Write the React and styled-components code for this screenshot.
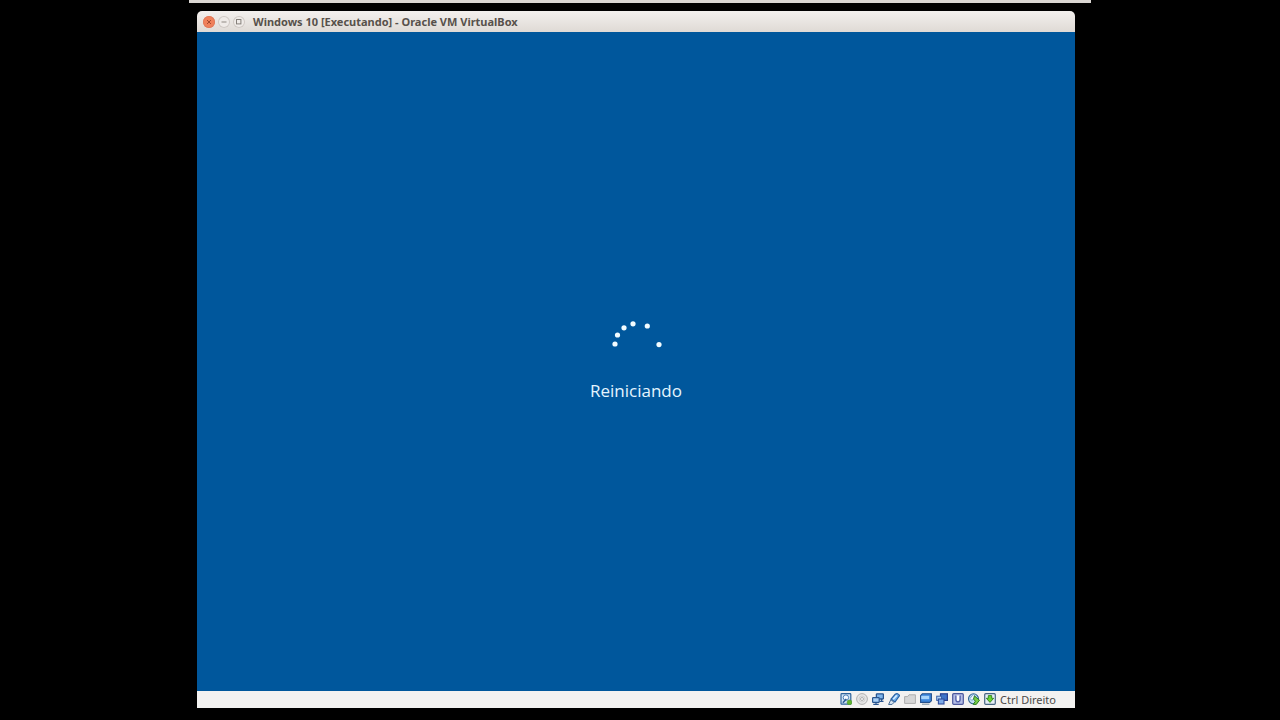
import React from "react";
import styled, { createGlobalStyle } from "styled-components";

const dots = [
  [5, 24],
  [7.5, 15],
  [14, 7.8],
  [23, 3.8],
  [37.3, 6],
  [49, 24.6],
];

const devices = [
  {
    name: "Discos rígidos",
    icon: (
      <>
        <rect x="1" y="0.6" width="9.8" height="10.6" rx="0.8" fill="#cfe2f5" stroke="#2f649c" strokeWidth="1.2" />
        <circle cx="5.9" cy="4.6" r="2.7" fill="#f4f9ff" stroke="#4d80b8" />
        <path d="M2.9 9.8L6.3 6" stroke="#2d5c96" strokeWidth="1.6" />
        <circle cx="9.5" cy="9.4" r="2.4" fill="#62b531" stroke="#4c9a2b" strokeWidth="0.6" />
      </>
    ),
  },
  {
    name: "Discos ópticos",
    icon: (
      <>
        <circle cx="6" cy="6" r="5.4" fill="#e6e6e6" stroke="#b0b0b0" />
        <circle cx="6" cy="6" r="3" fill="none" stroke="#d2d2d2" />
        <circle cx="6" cy="6" r="1.5" fill="#fafafa" stroke="#a0a0a0" strokeWidth="0.8" />
      </>
    ),
  },
  {
    name: "Rede",
    icon: (
      <>
        <rect x="4.4" y="0.8" width="7" height="5.2" rx="0.6" fill="#7fb4ea" stroke="#28548f" strokeWidth="1.3" />
        <path d="M9.6 6v2M7.5 8.4h4" stroke="#28548f" strokeWidth="1.2" />
        <rect x="0.6" y="4.7" width="6.6" height="4.6" rx="0.6" fill="#a9d0f7" stroke="#28548f" strokeWidth="1.2" />
        <path d="M4 9.5v1.4M1.3 11.3h5.4" stroke="#28548f" strokeWidth="1.2" />
      </>
    ),
  },
  {
    name: "USB",
    icon: (
      <>
        <path d="M3 6.2L7.2 1.3Q9.8-0.4 11.6 2.6L7 9z" fill="#6faeeb" stroke="#2b62a5" strokeWidth="1.2" />
        <path d="M5.2 6.2L8.8 2.4" stroke="#d6ebff" strokeWidth="1.6" />
        <path d="M2.8 6.7l3.3 2.6-2 2.1-3.5 0.1z" fill="#d8e4f0" stroke="#456b97" />
      </>
    ),
  },
  {
    name: "Pastas compartilhadas",
    icon: (
      <path d="M0.6 10.4V3.6h3L5 1.8h6.4v8.6z" fill="#d6d6d6" stroke="#aeaeae" strokeLinejoin="round" />
    ),
  },
  {
    name: "Tela",
    icon: (
      <>
        <path d="M2.3 0.8h9.1v7l-1.8 1.6H0.6V2.6z" fill="#3c86dc" stroke="#25508c" strokeWidth="1.1" />
        <path d="M1.2 2.8h8v3.4h-8z" fill="#a8d4fb" />
        <path d="M2 11.2h7.4" stroke="#8a9bac" strokeWidth="1.2" />
      </>
    ),
  },
  {
    name: "Gravação",
    icon: (
      <>
        <rect x="4.5" y="0.8" width="6.9" height="6.6" fill="#3f74c9" stroke="#283f8f" strokeWidth="1.2" />
        <rect x="0.7" y="3.2" width="4.8" height="4.2" fill="#b5d5f6" stroke="#3b62a8" />
        <rect x="2.4" y="6" width="5.6" height="5" fill="#7ba9e8" stroke="#2f4c9b" strokeWidth="1.1" />
      </>
    ),
  },
  {
    name: "Virtualização",
    icon: (
      <>
        <rect x="0.7" y="0.7" width="10.6" height="10.6" rx="1" fill="#b3bde6" stroke="#4c579b" strokeWidth="1.2" />
        <path d="M3.9 2.6v3.8Q3.9 8.8 6 8.8t2.1-2.4V2.6" fill="#fff" stroke="#5661ab" strokeWidth="1.4" />
      </>
    ),
  },
  {
    name: "Integração do mouse",
    icon: (
      <>
        <circle cx="5.5" cy="5.8" r="5" fill="#c0def5" stroke="#356694" strokeWidth="1.1" />
        <path d="M2 5.5L5.4 1.2l1.8 2.5L4 7.5z" fill="#f2f9ff" stroke="#6594bf" strokeWidth="0.8" />
        <path d="M6.4 2.9l5.1 4.3-3.2 4.2H5.2l2.2-3.2-1.8-2z" fill="#78cd46" stroke="#2c7c25" />
      </>
    ),
  },
  {
    name: "Captura do teclado",
    icon: (
      <>
        <rect x="0.7" y="0.7" width="10.6" height="10.6" rx="1" fill="#e4edf5" stroke="#476583" strokeWidth="1.2" />
        <path d="M4.3 2.6h3.4v2.7h2L6 9.4 2.3 5.3h2z" fill="#67d62d" stroke="#2f7f1e" strokeWidth="0.9" />
      </>
    ),
  },
];

export default function App() {
  return (
    <Desktop>
      <GlobalStyle />
      <Panel />
      <Window>
        <TitleBar>
          <WindowButton $close aria-label="Fechar">
            <svg viewBox="0 0 12 12">
              <path d="M4 4l4 4M8 4L4 8" stroke="#a3492f" />
            </svg>
          </WindowButton>
          <WindowButton aria-label="Minimizar">
            <svg viewBox="0 0 12 12">
              <path d="M3.5 6h5" stroke="#8f8983" />
            </svg>
          </WindowButton>
          <WindowButton aria-label="Maximizar">
            <svg viewBox="0 0 12 12">
              <rect x="3.5" y="3.5" width="4.4" height="4.4" fill="none" stroke="#85807a" />
            </svg>
          </WindowButton>
          <Title>Windows 10 [Executando] - Oracle VM VirtualBox</Title>
        </TitleBar>
        <Guest>
          <Spinner viewBox="0 0 52 52" aria-hidden="true">
            {dots.map(([x, y]) => (
              <circle key={x} cx={x} cy={y} r="2.6" />
            ))}
          </Spinner>
          <Message>Reiniciando</Message>
        </Guest>
        <StatusBar>
          <Devices>
            {devices.map(({ name, icon }) => (
              <DeviceButton key={name} aria-label={name}>
                <svg viewBox="0 0 12 12" fill="none">
                  {icon}
                </svg>
              </DeviceButton>
            ))}
          </Devices>
          <HostKey>Ctrl Direito</HostKey>
        </StatusBar>
      </Window>
    </Desktop>
  );
}

const GlobalStyle = createGlobalStyle`
  body {
    margin: 0;
    background: #000;
  }
  button {
    padding: 0;
    border: 0;
    background: none;
    svg {
      display: block;
      width: 100%;
      height: 100%;
    }
  }
`;

const Desktop = styled.div`
  box-sizing: border-box;
  min-height: 100vh;
  padding: 0 189px 12px;
  display: flex;
  flex-direction: column;
  gap: 8px;
  background: #000;
`;

const Panel = styled.div`
  height: 3px;
  background: #dad6d2;
`;

const Window = styled.main`
  flex: 1;
  margin: 0 16px 0 8px;
  display: flex;
  flex-direction: column;
  border-radius: 5px 5px 0 0;
  overflow: hidden;
`;

const TitleBar = styled.header`
  height: 21px;
  padding: 0 6px;
  display: flex;
  align-items: center;
  gap: 3px;
  background: linear-gradient(#f3f0ee, #dfdad5);
`;

const WindowButton = styled.button`
  box-sizing: border-box;
  width: 12px;
  height: 12px;
  border-radius: 50%;
  background: ${(props) => (props.$close ? "#f0805a" : "#efebe8")};
  box-shadow: 0 0 0 1px ${(props) => (props.$close ? "#e07a5c" : "#cfc9c4")} inset;
`;

const Title = styled.h1`
  margin: 0 0 0 5px;
  font: bold 11px/20px "Noto Sans", sans-serif;
  color: #57514b;
  white-space: nowrap;
`;

const Guest = styled.section`
  flex: 1;
  display: flex;
  flex-direction: column;
  align-items: center;
  justify-content: center;
  gap: 7px;
  background: #00579c;
`;

const Spinner = styled.svg`
  width: 52px;
  height: 52px;
  fill: #f2fcff;
`;

const Message = styled.p`
  margin: 0;
  font: 17px/24px "Open Sans", sans-serif;
  color: #e4f5ff;
`;

const StatusBar = styled.footer`
  height: 17px;
  padding: 0 19px;
  display: flex;
  align-items: center;
  justify-content: flex-end;
  gap: 4px;
  background: #f3f2f1;
`;

const Devices = styled.div`
  height: 16px;
  align-self: flex-start;
  display: flex;
  align-items: center;
  gap: 4px;
`;

const DeviceButton = styled.button`
  width: 12px;
  height: 12px;
`;

const HostKey = styled.span`
  font: 11px/17px "Noto Sans", sans-serif;
  color: #4c4a48;
  white-space: nowrap;
`;
